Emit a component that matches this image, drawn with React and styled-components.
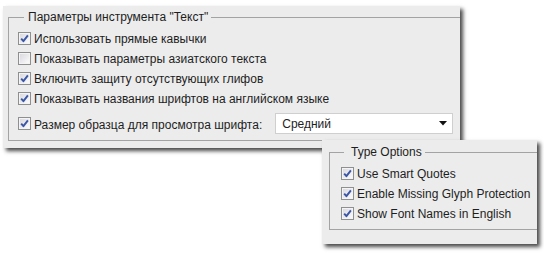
import styled, { createGlobalStyle } from 'styled-components';

const Global = createGlobalStyle`
  html, body { margin: 0; background: #fff; }
  body { font-family: "Liberation Sans", Arial, sans-serif; }
`;

const Desktop = styled.div`
  padding: 6px 0 0 3px;
  width: 544px;
  height: 257px;
  box-sizing: border-box;
  overflow: hidden;
`;

const Panel = styled.div`
  position: relative;
  width: ${p => p.$width}px;
  margin: ${p => p.$margin};
  padding: ${p => p.$padding};
  box-sizing: border-box;
  background: #ececec;
  overflow: hidden;
  box-shadow: 3px 3px 4px rgba(0, 0, 0, 0.72);
`;

const Group = styled.fieldset`
  margin: 0 -30px 0 0;
  min-width: 0;
  padding: 4px 0 6px ${p => p.$indent}px;
  border: 1px solid #a3a3a3;
`;

const Legend = styled.legend`
  margin-left: ${p => p.$offset}px;
  padding: 0 3px 0 ${p => p.$gap}px;
  font-size: 12px;
  line-height: 14px;
  color: #1e1e1e;
`;

const Row = styled.div`
  display: flex;
  align-items: center;
  height: ${p => p.$h || 20}px;
  margin-top: ${p => p.$mt || 0}px;
`;

const Box = styled.span`
  flex: none;
  width: 13px;
  height: 13px;
  box-sizing: border-box;
  border: 1px solid #8e8f8f;
  background: linear-gradient(135deg, #d6d6dc 0%, #f0f0f3 65%, #ffffff 100%);
  box-shadow: inset 0 0 0 1px #f4f4f4;
  display: flex;
  align-items: center;
  justify-content: center;
`;

const Label = styled.span`
  margin-left: 3px;
  padding-top: 2px;
  font-size: 12px;
  line-height: 14px;
  color: #1e1e1e;
  white-space: nowrap;
`;

const Select = styled.div`
  display: flex;
  align-items: center;
  justify-content: space-between;
  width: 178px;
  height: 21px;
  margin-left: ${p => p.$ml}px;
  padding: 0 5px 0 6px;
  box-sizing: border-box;
  background: #fff;
  border: 1px solid #cfcfcf;
  font-size: 12px;
  color: #1e1e1e;
`;

function Check({ checked, children }) {
  return (
    <>
      <Box>
        {checked && (
          <svg width="11" height="11" viewBox="0 0 11 11">
            <path d="M2.2 5.6 L4.4 8.2 L8.9 2.4" fill="none" stroke="#3a56a6" strokeWidth="1.9" strokeLinejoin="round" />
          </svg>
        )}
      </Box>
      <Label>{children}</Label>
    </>
  );
}

const ruRows = [
  ['Использовать прямые кавычки', true],
  ['Показывать параметры азиатского текста', false],
  ['Включить защиту отсутствующих глифов', true],
  ['Показывать названия шрифтов на английском языке', true],
];

const enRows = [
  'Use Smart Quotes',
  'Enable Missing Glyph Protection',
  'Show Font Names in English',
];

export default function App() {
  return (
    <>
      <Global />
      <Desktop>
        <Panel $width={457} $margin="0" $padding="4px 0 7px 5px">
          <Group $indent={9}>
            <Legend $offset={6} $gap={4}>Параметры инструмента "Текст"</Legend>
            {ruRows.map(([text, on]) => (
              <Row key={text}>
                <Check checked={on}>{text}</Check>
              </Row>
            ))}
            <Row $h={21} $mt={5}>
              <Check checked>Размер образца для просмотра шрифта:</Check>
              <Select $ml={13}>
                <span>Средний</span>
                <svg width="8" height="5" viewBox="0 0 8 5">
                  <path d="M0 0 H8 L4 4.5 Z" fill="#111" />
                </svg>
              </Select>
            </Row>
          </Group>
        </Panel>
        <Panel $width={215} $margin="-8px 0 0 319px" $padding="5px 0 14px 7px">
          <Group $indent={11}>
            <Legend $offset={3} $gap={7}>Type Options</Legend>
            {enRows.map(text => (
              <Row key={text}>
                <Check checked>{text}</Check>
              </Row>
            ))}
          </Group>
        </Panel>
      </Desktop>
    </>
  );
}
